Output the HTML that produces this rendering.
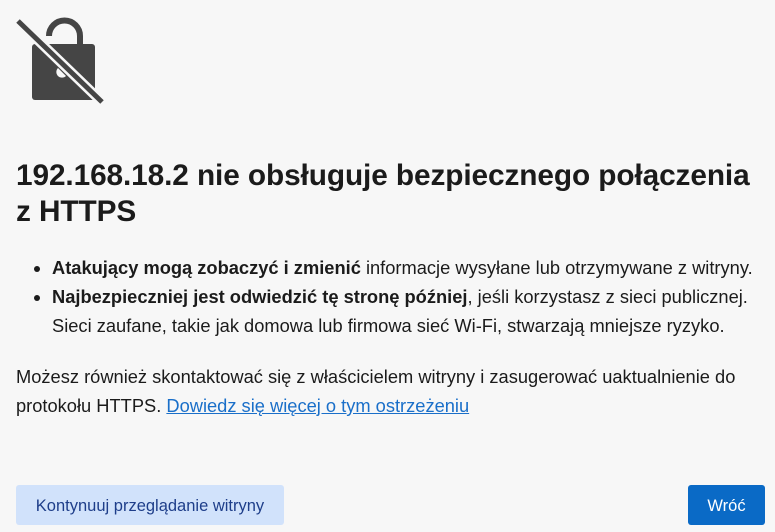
<!DOCTYPE html>
<html><head><meta charset="utf-8"><style>
body{margin:0;background:#f7f7f7;width:775px;height:532px;overflow:hidden;font-family:"Liberation Sans",sans-serif;color:#1b1b1b;position:relative}
svg{position:absolute;left:0;top:0}
h1{position:absolute;left:16px;top:158px;margin:0;font-size:29.8px;line-height:36px;font-weight:bold;width:745px;letter-spacing:-0.1px}
ul{position:absolute;left:16px;top:253px;margin:0;padding:0 0 0 36px;font-size:18.3px;line-height:29px;width:724px}
p{position:absolute;left:16px;top:362px;margin:0;font-size:18.3px;line-height:29px;width:759px}
a{color:#1a6fc9;text-decoration:underline}
.b1{position:absolute;left:16px;top:485px;width:268px;height:40px;background:#d1e2fb;border-radius:3px;color:#1e3e8a;font-size:16.5px;line-height:42px;text-align:center}
.b2{position:absolute;left:688px;top:485px;width:77px;height:40px;background:#0a6ac6;border-radius:3px;color:#fff;font-size:16.5px;line-height:42px;text-align:center}
</style></head><body>
<svg width="130" height="120" viewBox="0 0 130 120">
<path d="M49 36 A14 14 0 0 1 80 36 V46" fill="none" stroke="#454545" stroke-width="6"/>
<rect x="32" y="44" width="63" height="56" rx="3" fill="#454545"/>
<path d="M58 68 A5 5 0 0 0 66 76 Z" fill="#f7f7f7"/>
<line x1="17" y1="20" x2="103" y2="103" stroke="#f7f7f7" stroke-width="10"/>
<line x1="18" y1="21" x2="102" y2="102" stroke="#454545" stroke-width="5"/>
</svg>
<h1>192.168.18.2 nie obsługuje bezpiecznego połączenia z HTTPS</h1>
<ul>
<li><b>Atakujący mogą zobaczyć i zmienić</b> informacje wysyłane lub otrzymywane z witryny.</li>
<li><b>Najbezpieczniej jest odwiedzić tę stronę później</b>, jeśli korzystasz z sieci publicznej. Sieci zaufane, takie jak domowa lub firmowa sieć Wi-Fi, stwarzają mniejsze ryzyko.</li>
</ul>
<p>Możesz również skontaktować się z właścicielem witryny i zasugerować uaktualnienie do protokołu HTTPS. <a>Dowiedz się więcej o tym ostrzeżeniu</a></p>
<div class="b1">Kontynuuj przeglądanie witryny</div>
<div class="b2">Wróć</div>
</body></html>
